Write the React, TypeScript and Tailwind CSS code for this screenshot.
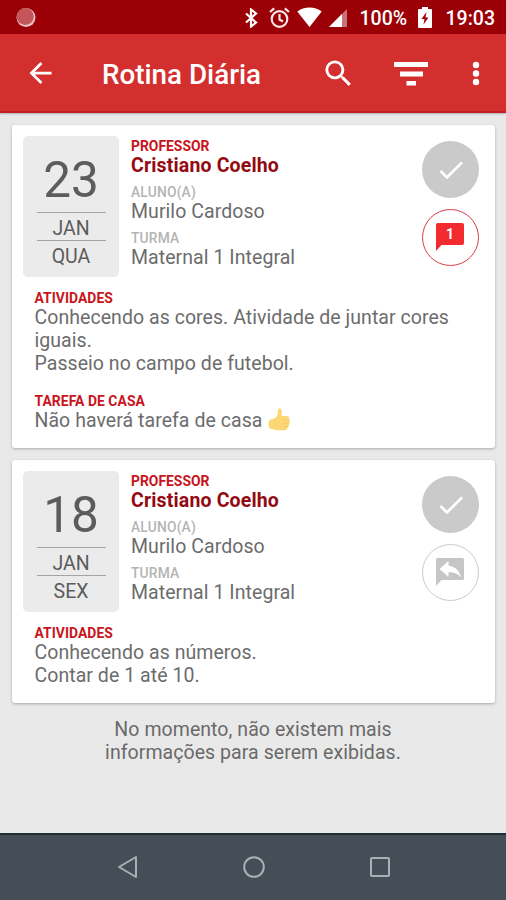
import React from "react";

const CheckBadge = () => (
  <div className="flex h-[57px] w-[57px] items-center justify-center rounded-full bg-[#cacaca]">
    <svg width="32" height="32" viewBox="0 0 24 24" fill="#fff">
      <path d="M9 16.17L4.83 12l-1.42 1.41L9 19 21 7l-1.41-1.41z" />
    </svg>
  </div>
);

const CountBadge = () => (
  <div className="flex h-[57px] w-[57px] items-center justify-center rounded-full border border-[#d5404a]">
    <div className="relative mr-px h-[28px] w-[28px]">
      <svg className="absolute inset-0" width="28" height="28" viewBox="0 0 28 28" fill="#f12b2e">
        <path d="M2 0h24a2 2 0 0 1 2 2v18a2 2 0 0 1-2 2H5.500L0 28V2a2 2 0 0 1 2-2z" />
      </svg>
      <span className="absolute inset-x-0 top-[3px] text-center text-[14px] leading-[17px] font-bold text-white">1</span>
    </div>
  </div>
);

const ReplyBadge = () => (
  <div className="flex h-[57px] w-[57px] items-center justify-center rounded-full border border-[#cccccc]">
    <svg className="mr-px" width="28" height="28" viewBox="0 0 28 28">
      <path fill="#c6c6c6" d="M1.500 0h25A1.500 1.500 0 0 1 28 1.500v19a1.500 1.500 0 0 1-1.500 1.500H5.500L0 28V1.500A1.500 1.500 0 0 1 1.500 0z" />
      <path fill="#fff" d="M3.500 11l9-8v4.500c7 1 11 5.500 12.500 12-3-4-7-5.300-12.500-5.300v4.800z" />
    </svg>
  </div>
);

const ThumbsUp = () => (
  <svg className="ml-[6px] inline-block align-[-4px]" width="22" height="23" viewBox="0 0 22 23">
    <path fill="#fbd873" d="M9 8c1-2 .8-5 1-6.500C10.300.3 12.800.2 13.500 2c.7 2 .3 4 0 6h5.300c2 0 2.700 1.500 2.200 2.800 1 1 1 2.400.2 3.200.6 1.100.3 2.300-.6 3 .4 1.200-.1 2.400-1.200 2.800.1 1.600-.8 2.400-2.400 2.400H9c-2 0-3-.8-4.500-1.200C1.500 21 .5 19 .5 16s1-4.500 3.500-5c2.200-.4 3.800-1.200 5-3z" />
    <path stroke="#f3c75f" strokeWidth=".8" fill="none" d="M15 11.800h6M15 15.300h6M14.500 18.700h5.500" />
  </svg>
);

const Label = ({ children }: { children: React.ReactNode }) => (
  <div className="h-[18px] pt-px text-[13.900px] leading-[18px] font-bold text-[#c8151d]">{children}</div>
);

const Field = ({ label, value }: { label: string; value: string }) => (
  <div className="h-[46px]">
    <div className="h-[19px] pt-[2px] text-[13.800px] leading-[18px] font-medium tracking-[0.200px] text-[#b4b4b4]">{label}</div>
    <div className="text-[19.500px] leading-[23px] tracking-[0.060px] text-[#6c6c6c]">{value}</div>
  </div>
);

type EntryProps = { day: string; month: string; weekday: string; badge: React.ReactNode; children: React.ReactNode };

const Entry = ({ day, month, weekday, badge, children }: EntryProps) => (
  <article className="mr-[11px] ml-[12px] rounded-[3px] bg-white px-[11px] pt-[11.500px] shadow-[0_1px_3px_rgba(0,0,0,0.28)]">
    <div className="flex">
      <div className="flex h-[140.500px] w-[96px] flex-col items-center rounded-[5px] bg-[#ebebeb] text-[#5c5c5c]">
        <div className="mt-[15px] h-[61px] text-[49.500px] leading-[58px]">{day}</div>
        <div className="h-[29px] w-[69px] border-y border-[#a4a4a4] pt-[3px] text-center text-[19.500px] leading-[26px]">{month}</div>
        <div className="pt-[3px] text-[19.500px] leading-[26px]">{weekday}</div>
      </div>
      <div className="ml-[12px] flex-1">
        <Label>PROFESSOR</Label>
        <div className="mb-[3.500px] text-[19.500px] leading-[23px] font-bold tracking-[0.160px] text-[#930a12]">Cristiano Coelho</div>
        <Field label="ALUNO(A)" value="Murilo Cardoso" />
        <Field label="TURMA" value="Maternal 1 Integral" />
      </div>
      <div className="mt-[5px] mr-[5px] flex flex-col gap-[10.500px]">
        <CheckBadge />
        {badge}
      </div>
    </div>
    <div className="px-[11.500px] pt-[11px] text-[19.500px] leading-[23px] tracking-[0.050px] text-[#6c6c6c]">{children}</div>
  </article>
);

export default function App() {
  return (
    <div className="flex h-[900px] w-[506px] flex-col overflow-hidden bg-[#e9e9e9] font-[Roboto,sans-serif]">
      <div className="flex h-[34px] shrink-0 items-center bg-[#9b0006] text-white">
        <svg className="ml-[15px]" width="22" height="22" viewBox="0 0 22 22">
          <circle cx="11" cy="11.500" r="9.500" fill="#e9c3c3" />
          <circle cx="10.300" cy="10.600" r="8.500" fill="#c4565b" />
        </svg>
        <svg className="mt-px ml-[207px]" width="15" height="20" viewBox="0 0 15 20" fill="none" stroke="#fff" strokeWidth="2.200">
          <path d="M2 5.500l10 9-5 4V1.500l5 4-10 9" />
        </svg>
        <svg className="mt-px ml-[10px]" width="21" height="22" viewBox="0 0 21 22" fill="none" stroke="#fbe6e6" strokeWidth="2.200">
          <circle cx="10.500" cy="12" r="7.800" />
          <path d="M10.500 7v5.500l3.500 2M1 5l4.200-3.600M20 5l-4.200-3.600" />
        </svg>
        <svg className="ml-[7px]" width="25" height="20" viewBox="0 0 25 20" fill="#fff">
          <path d="M12.500 20L.3 4.500C7-1 18-1 24.700 4.500z" />
        </svg>
        <svg className="mt-[2px] ml-[7px]" width="18" height="18" viewBox="0 0 18 18">
          <path fill="#c57477" d="M18 0v18H0z" />
          <path fill="#fff" d="M13 5v13H0z" />
        </svg>
        <span className="mt-[4px] ml-[12.500px] w-[48px] text-[19.500px] leading-[28px] font-medium whitespace-nowrap">100%</span>
        <svg className="ml-[10px]" width="14" height="21" viewBox="0 0 14 21">
          <path fill="#fff" d="M4 0h6v2h3q1 0 1 1v17q0 1-1 1H1q-1 0-1-1V3q0-1 1-1h3z" />
          <path fill="#9b0006" d="M8.500 5L3.500 12H6.500L5.500 17.500 10.500 10.500H7.500z" />
        </svg>
        <span className="mt-[4px] ml-[14px] text-[19.500px] leading-[28px] font-medium whitespace-nowrap">19:03</span>
      </div>

      <header className="z-10 flex h-[79px] shrink-0 items-center border-b-2 border-[#bd2025] bg-[#d32f2f] text-white shadow-[0_1px_2px_rgba(0,0,0,0.25)]">
        <svg className="mt-px ml-[23.500px]" width="33" height="34" viewBox="0 0 24 24" fill="#fff">
          <path d="M20 11H7.830l5.590-5.590L12 4l-8 8 8 8 1.410-1.410L7.830 13H20v-2z" />
        </svg>
        <h1 className="mt-[4px] ml-[45.500px] w-[162px] text-[27.800px] leading-[34px] font-medium whitespace-nowrap">Rotina Diária</h1>
        <svg className="mt-px ml-[56.500px]" width="35" height="35" viewBox="0 0 24 24" fill="#fff">
          <path d="M15.500 14h-.79l-.28-.27A6.471 6.471 0 0 0 16 9.500 6.500 6.500 0 1 0 9.500 16c1.610 0 3.090-.59 4.230-1.570l.27.28v.79l5 4.990L20.490 19l-4.990-5zm-6 0C7.010 14 5 11.990 5 9.500S7.010 5 9.500 5 14 7.010 14 9.500 11.990 14 9.500 14z" />
        </svg>
        <svg className="mt-[2px] ml-[38px]" width="34" height="24" viewBox="0 0 34 24" fill="#fff">
          <path d="M0 0h34v5H0zM6 9.500h23v5H6zM12.500 19h9.500v4.500h-9.500z" />
        </svg>
        <svg className="mt-[3px] ml-[44px]" width="8" height="26" viewBox="0 0 8 26" fill="#fff">
          <circle cx="4" cy="4" r="3.200" />
          <circle cx="4" cy="12.500" r="3.200" />
          <circle cx="4" cy="21" r="3.200" />
        </svg>
      </header>

      <main className="flex-1 pt-[11.500px]">
        <div className="h-[335px]">
          <div className="grid h-[323px]">
            <Entry day="23" month="JAN" weekday="QUA" badge={<CountBadge />}>
              <Label>ATIVIDADES</Label>
              <p>Conhecendo as cores. Atividade de juntar cores iguais.</p>
              <p>Passeio no campo de futebol.</p>
              <div className="mt-[16px]"><Label>TAREFA DE CASA</Label></div>
              <p className="-mt-px">Não haverá tarefa de casa<ThumbsUp /></p>
            </Entry>
          </div>
        </div>
        <div className="grid h-[243px]">
          <Entry day="18" month="JAN" weekday="SEX" badge={<ReplyBadge />}>
            <Label>ATIVIDADES</Label>
            <p>Conhecendo as números.</p>
            <p>Contar de 1 até 10.</p>
          </Entry>
        </div>
        <p className="mt-[15px] text-center text-[19.500px] leading-[23px] tracking-[0.060px] text-[#6a6a6a]">
          No momento, não existem mais
          <br />
          informações para serem exibidas.
        </p>
      </main>

      <nav className="flex h-[67px] shrink-0 items-center border-t-2 border-[#1c2f35] bg-[#454d56] pb-[2px]">
        <svg className="ml-[116.500px]" width="21" height="24" viewBox="0 0 21 24" fill="none" stroke="#a9afb4" strokeWidth="2" strokeLinejoin="round">
          <path d="M19 2v20L2 12z" />
        </svg>
        <svg className="ml-[104px]" width="24" height="24" viewBox="0 0 24 24" fill="none" stroke="#a9afb4" strokeWidth="2">
          <circle cx="12" cy="12" r="9.800" />
        </svg>
        <svg className="ml-[103.500px]" width="22" height="22" viewBox="0 0 22 22" fill="none" stroke="#a9afb4" strokeWidth="2">
          <rect x="2" y="2" width="18" height="18" rx="1" />
        </svg>
      </nav>
    </div>
  );
}
